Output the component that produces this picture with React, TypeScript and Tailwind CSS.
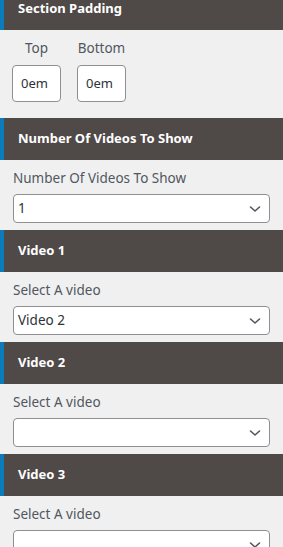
import React from "react";

const font = { fontFamily: '"Noto Sans", "Open Sans", sans-serif' };

function Header({ title }: { title: string }) {
  return (
    <div className="flex h-[42px] items-center border-l-4 border-[#0a7cba] bg-[#4f4947] pl-[14px] text-[13px] font-bold text-white">
      {title}
    </div>
  );
}

function Chevron() {
  return (
    <svg width="12" height="8" viewBox="0 0 12 8" className="absolute right-[8px] top-1/2 -translate-y-1/2">
      <path d="M1.5 2l4.5 4 4.5-4" fill="none" stroke="#50575e" strokeWidth="1.6" strokeLinecap="round" strokeLinejoin="round" />
    </svg>
  );
}

function SelectSection({ title, label, value }: { title: string; label: string; value: string }) {
  return (
    <div>
      <Header title={title} />
      <div className="px-[13px] pb-[7px] pt-[9px]">
        <div className="mb-[7px] text-[13.5px] leading-[18px] text-[#50575e]">{label}</div>
        <div className="relative flex h-[29px] w-[257px] items-center rounded-[4px] border border-[#8c8f94] bg-white pl-[4px] text-[13.5px] text-[#2c3338]">
          {value}
          <Chevron />
        </div>
      </div>
    </div>
  );
}

export default function App() {
  return (
    <div className="h-[547px] w-[283px] overflow-hidden bg-[#f0f0f1]" style={font}>
      <div className="-mt-[12px]">
        <Header title="Section Padding" />
        <div className="flex gap-[16px] pb-[16px] pl-[12px] pt-[9px]">
          {["Top", "Bottom"].map((l) => (
            <div key={l} className="flex w-[49px] flex-col items-center">
              <div className="mb-[8px] text-[13.5px] leading-[18px] text-[#50575e]">{l}</div>
              <div className="flex h-[37px] w-[49px] items-center rounded-[4px] border border-[#8c8f94] bg-white pl-[8px] text-[13px] text-[#2c3338]">
                0em
              </div>
            </div>
          ))}
        </div>
        <SelectSection title="Number Of Videos To Show" label="Number Of Videos To Show" value="1" />
        <SelectSection title="Video 1" label="Select A video" value="Video 2" />
        <SelectSection title="Video 2" label="Select A video" value="" />
        <SelectSection title="Video 3" label="Select A video" value="" />
      </div>
    </div>
  );
}
